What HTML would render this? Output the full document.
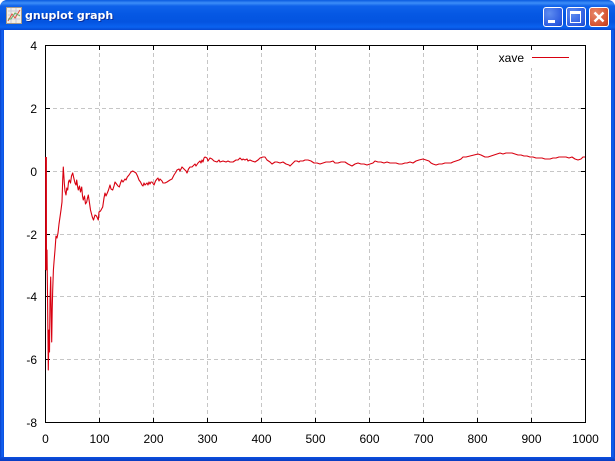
<!DOCTYPE html>
<html><head><meta charset="utf-8"><style>
html,body{margin:0;padding:0;background:#fff}
#w{position:relative;width:615px;height:461px;overflow:hidden;background:#0a50dc;border-radius:7px 7px 0 0}
#tb{position:absolute;left:0;top:0;width:615px;height:30px;border-radius:7px 7px 0 0;background:linear-gradient(180deg,#0a5ae0 0,#3c8ef8 3px,#0f62ea 6px,#0558e4 14px,#0454e0 22px,#0a62f0 27px,#0548d0 30px)}
#side{position:absolute;left:0;top:30px;width:615px;height:431px;background:linear-gradient(90deg,#0a3fc8 0,#1262f2 2px,#0a50e0 4px,#0a50e0 611px,#1060f0 613px,#0a3cc0 615px)}
#bot{position:absolute;left:0;top:457px;width:615px;height:4px;background:linear-gradient(180deg,#0a50e0,#0a3cc0)}
#c{position:absolute;left:4px;top:30px;width:607px;height:427px;background:#fff}
#t{position:absolute;left:25px;top:9px;font:bold 11px "DejaVu Sans",sans-serif;color:#fff;text-shadow:1px 1px 0 #0a2f9c;white-space:nowrap}
.b{position:absolute;top:7px;width:18px;height:18px;border:1px solid #fff;border-radius:3px;background:radial-gradient(circle at 30% 30%,#5f8df0,#2a5ae0 75%,#1c46c4)}
</style></head><body><div id="w">
<div id="tb"></div><div id="side"></div><div id="bot"></div><div id="c"></div>
<svg style="position:absolute;left:6px;top:7px" width="16" height="17" viewBox="0 0 16 17"><rect x=".5" y=".5" width="15" height="16" fill="#f4efe4" stroke="#a89a88"/><path d="M2 4H14M2 8H14M2 12H14M5 1V16M10 1V16" stroke="#c8c8d8" stroke-width="1"/><path d="M2 14L6 7L9 11L14 3" stroke="#e05040" fill="none"/><path d="M2 12L5 12L9 6L14 9" stroke="#60b060" fill="none"/></svg>
<div id="t">gnuplot graph</div>
<div class="b" style="left:543px"><div style="position:absolute;left:4px;top:12px;width:7px;height:3px;background:#fff"></div></div>
<div class="b" style="left:566px"><div style="position:absolute;left:3px;top:3px;width:9px;height:8px;border:1px solid #fff;border-top:3px solid #fff"></div></div>
<div class="b" style="left:589px;background:radial-gradient(circle at 30% 30%,#e8896c,#d4512e 70%,#b83a1c)"><svg style="position:absolute;left:0;top:0" width="18" height="18"><path d="M4.5 4.5L13.5 13.5M13.5 4.5L4.5 13.5" stroke="#fff" stroke-width="2.4"/></svg></div>

<svg style="position:absolute;left:0;top:0" width="615" height="461" viewBox="0 0 615 461" font-family="Liberation Sans,sans-serif" font-size="12" fill="#000">
<g stroke="#c6c6c6" stroke-dasharray="4 3" fill="none" shape-rendering="crispEdges">
<path d="M99.5 46V422M153.5 46V422M207.5 46V422M261.5 46V422M315.5 46V422M369.5 46V422M423.5 46V422M477.5 46V422M531.5 46V422"/>
<path d="M46 108.5H585M46 171.5H585M46 234.5H585M46 296.5H585M46 359.5H585"/>
</g>
<rect x="490" y="48" width="84" height="20" fill="#fff"/>
<path d="M99.5 46V50M153.5 46V50M207.5 46V50M261.5 46V50M315.5 46V50M369.5 46V50M423.5 46V50M477.5 46V50M531.5 46V50M99.5 422V418M153.5 422V418M207.5 422V418M261.5 422V418M315.5 422V418M369.5 422V418M423.5 422V418M477.5 422V418M531.5 422V418M46 108.5H50M46 171.5H50M46 234.5H50M46 296.5H50M46 359.5H50M585 108.5H581M585 171.5H581M585 234.5H581M585 296.5H581M585 359.5H581" stroke="#000" shape-rendering="crispEdges"/>
<rect x="45.5" y="45.5" width="540" height="377" fill="none" stroke="#000" shape-rendering="crispEdges"/>
<polyline fill="none" stroke="#d80010" stroke-width="1.1" stroke-linejoin="round" points="46,157 46.3,240 46.6,270 47,250 47.4,285 48,340 48.3,370 49,330 49.5,352 50,300 50.7,277 51.2,315 51.7,342 52.2,310 52.7,290 53.4,270 54,262 55,250 56,236 57,238 58,233 59,224 60,217 61,210 62,202 62.7,180 63.3,167 64.3,183 65,191 66,195 66.8,188 67.7,190 68.5,182 69.3,180 70.5,183 71.5,176 72.7,173 73.8,178 75,183 76,185 76.7,180 77.5,186 78.3,190 79.5,186 80.5,192 81.7,187 82.5,196 83.3,200 84.5,196 85.5,204 86.7,202 87.5,198 88.3,195 89.5,203 90.5,210 92.3,217 93.5,220 95,215 96.5,216 98.3,220 99,212 100.5,211 102.7,207 104,198 105,193 106,196 107.3,193 108.5,190 110,185 111,189 112.7,190 114,186 115,182 116.5,184 118,186 119.3,187 120.5,183 121.7,180 123,182 125,179 126,180 127.3,177 129,175 131,172 132.7,171 134.5,172 136,173 137.5,176 139,180 140.5,182 142,185 143,186 144,183 145,185 147,183 148,185 149,182 150,184 151,182 152,182 154,185 155.5,181 157,179 158,178 159,181 160,179 162,181 163,183 165,183 167,182 170,180 172,179 174,175 176,172 177,170 179,169 180,171 182,167 184,169 186,171 187,173 188.5,169 190,167 192,167 193,166 195,164 196,166 198,163 200,161 201,163 202,160 203,162 204,158 205,157 207,158 208,161 210,158 212,159 214,161 217,162 219,160 220,162 223,161 226,162 228,161 230,162 233,162 236,160 238,160 240,158 242,160 243,159 245,160 247,159 248,161 250,160 252,161 255,162 258,160 260,158 263,157 265,157 267,160 270,162 272,164 275,162 277,162 280,163 283,162 286,164 289,165 290,166 293,163 295,161 297,161 299,162 300,161 303,161 305,160 308,160 311,161 314,163 317,163 320,164 323,163 326,162 330,162 333,161 335,163 338,163 341,162 345,162 348,164 350,165 352,166 355,164 358,163 361,164 364,164 367,165 370,164 373,163 375,161 378,162 381,162 384,163 387,162 390,163 393,163 396,163 399,164 402,164 405,163 407,163 410,162 413,163 416,161 419,160 423,159 426,160 429,161 431,163 433,164 436,165 439,164 442,164 445,163 448,163 451,163 453,162 456,161 459,160 461,159 463,157 466,157 470,156 474,155 478,154 481,155 483,156 485,157 488,157 491,156 494,155 497,154 500,153 503,154 506,153 509,153 512,153 515,154 518,155 521,155 524,156 527,156 530,157 533,157 536,158 539,158 542,158 545,159 547,159 550,159 553,158 556,158 559,157 563,157 566,157 569,158 572,157 575,159 578,160 581,159 583,157 585,157"/>
<path d="M46 157V270" stroke="#d80010" stroke-width="1.8" fill="none"/>
<rect x="532" y="57" width="37" height="1" fill="#d80010"/>
<text x="524" y="62" text-anchor="end">xave</text>
<g text-anchor="end">
<text x="37" y="50">4</text><text x="37" y="113">2</text><text x="37" y="176">0</text><text x="37" y="239">-2</text><text x="37" y="301">-4</text><text x="37" y="364">-6</text><text x="37" y="427">-8</text>
</g>
<g text-anchor="middle">
<text x="45.5" y="443">0</text><text x="99.5" y="443">100</text><text x="153.5" y="443">200</text><text x="207.5" y="443">300</text><text x="261.5" y="443">400</text><text x="315.5" y="443">500</text><text x="369.5" y="443">600</text><text x="423.5" y="443">700</text><text x="477.5" y="443">800</text><text x="531.5" y="443">900</text><text x="585.5" y="443">1000</text>
</g>
</svg>
</div></body></html>
